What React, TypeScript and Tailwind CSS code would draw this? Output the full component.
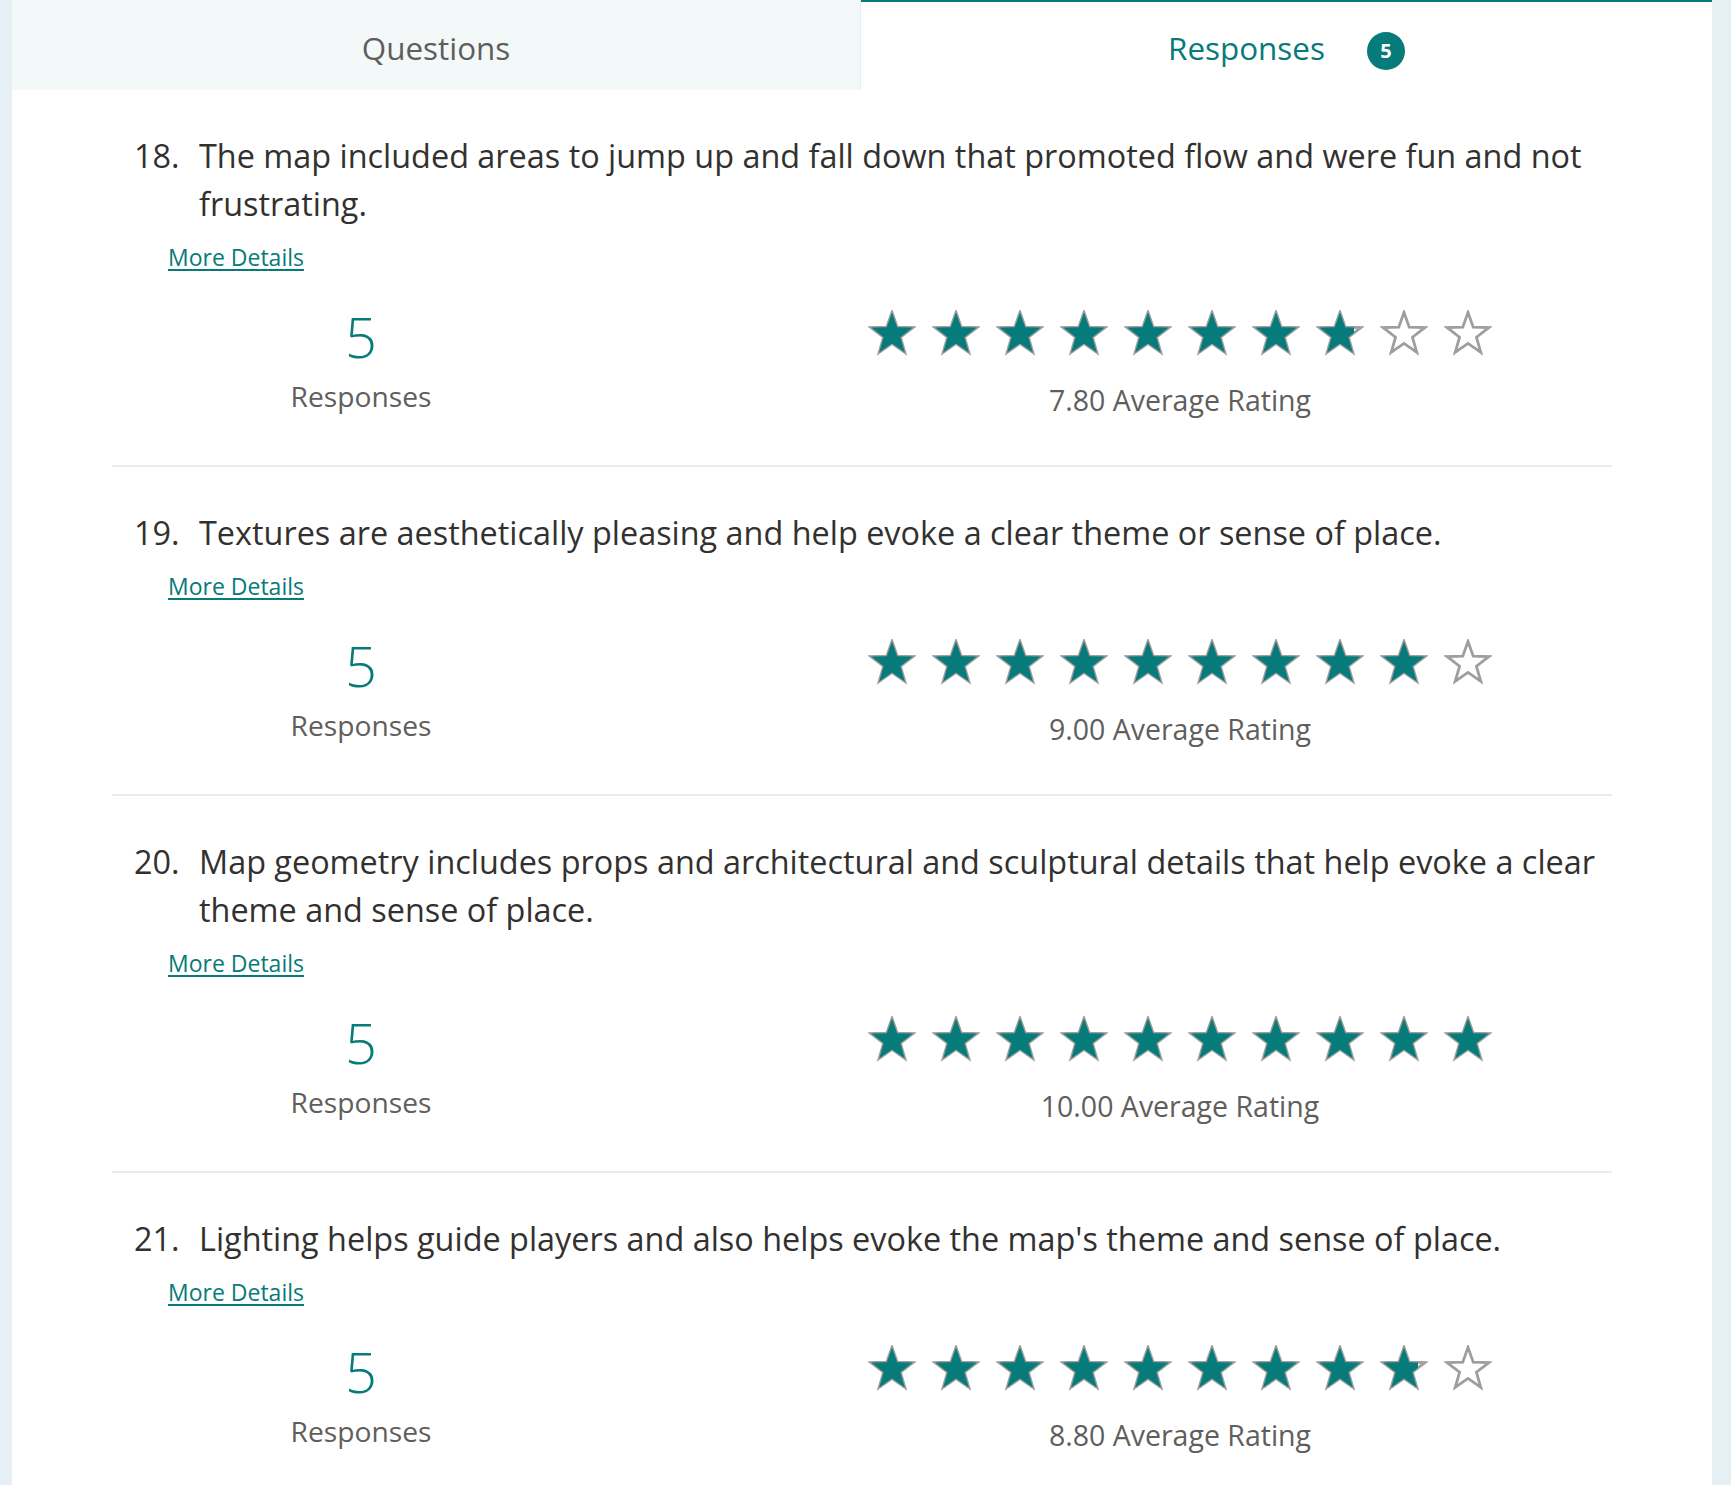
import React from 'react';

type Question = {
  num: number;
  text: string;
  responses: number;
  average: number;
};

const questions: Question[] = [
  {
    num: 18,
    text: 'The map included areas to jump up and fall down that promoted flow and were fun and not frustrating.',
    responses: 5,
    average: 7.8,
  },
  {
    num: 19,
    text: 'Textures are aesthetically pleasing and help evoke a clear theme or sense of place.',
    responses: 5,
    average: 9.0,
  },
  {
    num: 20,
    text: 'Map geometry includes props and architectural and sculptural details that help evoke a clear theme and sense of place.',
    responses: 5,
    average: 10.0,
  },
  {
    num: 21,
    text: "Lighting helps guide players and also helps evoke the map's theme and sense of place.",
    responses: 5,
    average: 8.8,
  },
];

const STAR_POINTS = '12,1.2 14.6,8.6 22.4,8.8 16.2,13.6 18.4,21.2 12,16.7 5.6,21.2 7.8,13.6 1.6,8.8 9.4,8.6';

const Star: React.FC<{ fill: number }> = ({ fill }) => {
  return (
    <div className="relative w-[48px] h-[48px] shrink-0">
      <svg viewBox="0 0 24 24" className="absolute inset-0 w-[48px] h-[48px]">
        <polygon points={STAR_POINTS} fill="none" stroke="#9e9e9e" strokeWidth="1.4" strokeLinejoin="miter" />
      </svg>
      {fill > 0 && (
        <div className="absolute left-0 top-0 h-[48px] overflow-hidden" style={{ width: `${fill * 100}%` }}>
          <svg viewBox="0 0 24 24" className="w-[48px] h-[48px]">
            <polygon points={STAR_POINTS} fill="#077b79" />
          </svg>
        </div>
      )}
    </div>
  );
};

const QuestionBlock: React.FC<{ q: Question; last: boolean }> = ({ q, last }) => {
  return (
    <div className={`pt-[41px] pb-[47px] ${last ? '' : 'border-b-2 border-[#ebebeb]'}`}>
      <div className="flex pl-[22px] text-[32.4px] leading-[48px] text-[#323130]">
        <span className="w-[65px] shrink-0">{q.num}.</span>
        <p className="flex-1">{q.text}</p>
      </div>
      <a href="#" className="block w-fit ml-[56px] mt-[15px] text-[23px] leading-[30px] text-[#077b79] underline underline-offset-[3px]">
        More Details
      </a>
      <div className="flex items-start mt-[32px]">
        <div className="w-[498px] flex flex-col items-center">
          <span className="text-[56px] leading-[64px] font-light text-[#077b79]">{q.responses}</span>
          <span className="mt-[10px] text-[28.2px] leading-[36px] text-[#605e5c]">Responses</span>
        </div>
        <div className="ml-[258px] w-[624px] mt-[6px] flex flex-col items-center">
          <div className="flex gap-[16px]">
            {Array.from({ length: 10 }).map((_, i) => (
              <Star key={i} fill={Math.max(0, Math.min(1, q.average - i))} />
            ))}
          </div>
          <span className="mt-[24px] text-[28.5px] leading-[36px] text-[#605e5c]">
            {q.average.toFixed(2)} Average Rating
          </span>
        </div>
      </div>
    </div>
  );
};

export default function App() {
  return (
    <div className="min-h-screen bg-[#e6f0f4] pl-[12px] font-['Open_Sans',sans-serif]">
      <div className="w-[1700px] min-h-screen bg-white">
        <div className="flex h-[90px]">
          <div className="w-[849px] bg-[#f3f8f9] border-r border-[#e8eef0] flex items-center justify-center pt-[6px]">
            <span className="text-[31.4px] text-[#605e5c]">Questions</span>
          </div>
          <div className="flex-1 border-t-2 border-[#077b79] flex items-center justify-center gap-[42px] pt-[4px]">
            <span className="text-[31.4px] text-[#077b79]">Responses</span>
            <span className="w-[38px] h-[38px] mt-[6px] rounded-full bg-[#077b79] text-white text-[20px] font-bold flex items-center justify-center">
              5
            </span>
          </div>
        </div>
        <div className="px-[100px]">
          {questions.map((q, i) => (
            <QuestionBlock key={q.num} q={q} last={i === questions.length - 1} />
          ))}
        </div>
      </div>
    </div>
  );
}
